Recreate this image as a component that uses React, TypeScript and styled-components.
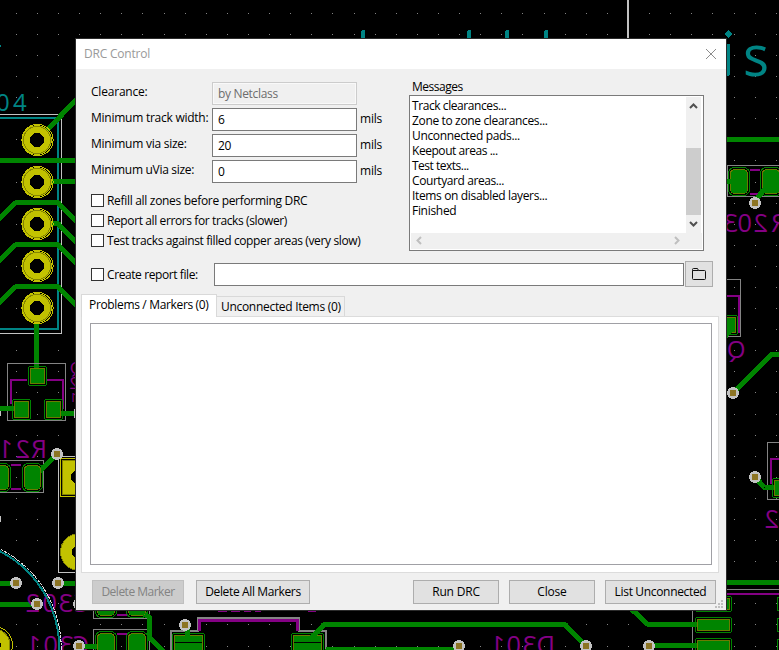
import React from 'react';
import styled, { createGlobalStyle } from 'styled-components';

const GlobalStyle = createGlobalStyle`
  * { box-sizing: border-box; }
  html, body { margin: 0; padding: 0; background: #000; overflow: hidden; }
  body { font-family: "Open Sans", "Noto Sans", sans-serif; font-size: 12px; color: #000; }
`;

const GREEN = '#008400';
const YELLOW = '#c2c200';
const TEAL = '#008484';
const PURPLE = '#840084';
const GRAY = '#848484';
const LIGHT = '#c2c2c2';

/* ---------- Board canvas ---------- */

const Screen = styled.main`
  position: relative;
  width: 779px;
  height: 650px;
  overflow: hidden;
  background: #000;
`;

const Canvas = styled.svg`
  display: block;
  width: 779px;
  height: 650px;
`;

const Silk = styled.text`
  font-family: "Open Sans", "Noto Sans", sans-serif;
  font-weight: 400;
`;

const Track = ({ d, w = 5 }: { d: string; w?: number }) => (
  <path d={d} fill="none" stroke={GREEN} strokeWidth={w} strokeLinecap="round" strokeLinejoin="round" />
);

const Line = ({ d, c, w = 1 }: { d: string; c: string; w?: number }) => (
  <path d={d} fill="none" stroke={c} strokeWidth={w} />
);

const Via = ({ x, y }: { x: number; y: number }) => (
  <g>
    <circle cx={x} cy={y} r={6} fill={LIGHT} />
    <rect x={x - 3} y={y - 3} width={6} height={6} fill="#8c7423" />
  </g>
);

const Ring = ({ x, y }: { x: number; y: number }) => (
  <g>
    <circle cx={x} cy={y} r={10.8} fill="none" stroke={YELLOW} strokeWidth={8} />
    <circle cx={x} cy={y} r={13.6} fill="none" stroke="#848400" strokeWidth={1} />
    <circle cx={x + 0.5} cy={y} r={15.6} fill="none" stroke={YELLOW} strokeWidth={1} />
    <circle cx={x} cy={y} r={7} fill="#000" />
  </g>
);

type PadProps = { x: number; y: number; w: number; h: number; r?: number };
const Pad = ({ x, y, w, h, r = 0 }: PadProps) => (
  <g>
    <rect x={x - 1.5} y={y - 1.5} width={w + 3} height={h + 3} rx={r + 2} fill="none" stroke={GREEN} />
    <rect x={x + 0.5} y={y + 0.5} width={w - 1} height={h - 1} rx={r} fill={GREEN} stroke="#6b7a00" />
  </g>
);

/* Silkscreen on the back side is mirrored; `at` holds the right edge of each character cell. */
const BackLabel = ({ at, y, size = 25.5, text }: { at: number[]; y: number; size?: number; text: string }) => (
  <Silk
    transform={`translate(0 ${y}) scale(-1 1)`}
    x={at.map((v) => -v).join(' ')}
    fill={PURPLE}
    fontSize={size}
  >
    {text}
  </Silk>
);

const gridDots: Array<[number, number]> = [];
for (let row = 0; row < 31; row++) {
  for (let col = 0; col < 37; col++) {
    gridDots.push([Math.floor(16.3 + col * 21.11), Math.floor(13.3 + row * 21.09)]);
  }
}

const Board = () => (
  <Canvas viewBox="0 0 779 650" shapeRendering="crispEdges">
    {gridDots.map(([x, y]) => (
      <rect key={`${x}-${y}`} x={x} y={y} width={1} height={1} fill={GRAY} />
    ))}

    {/* connector on the left */}
    <Line d="M0 114.5H61.5V333.5H0" c={LIGHT} />
    <Line d="M0 118H58V329H0" c={TEAL} w={2} />
    <Silk x="-4 13" y={111} fontSize={24} fill={TEAL}>04</Silk>
    <rect x={0} y={45} width={1} height={2} fill={TEAL} />
    <Track d="M46 131L78 98" />
    <Track d="M-4 160.5H80" />
    <Track d="M46 181.5H80" />
    <Track d="M-2 220L16 202.5H58L80 225" />
    <Track d="M46 223.5H58L80 246" />
    <Track d="M-2 262L16 244.5H58L80 267" />
    <Track d="M-2 304L16 286.5H58L80 309" />
    <Track d="M36.5 310V370" />
    {[140, 182, 224, 266, 308].map((y) => <Ring key={y} x={37} y={y} />)}

    {/* transistor footprint */}
    <rect x={7.5} y={363.5} width={58} height={57} fill="none" stroke={GRAY} />
    <Line d="M11 404V380H27M47 380H63V409" c={PURPLE} w={2} />
    <Track d="M-4 408.5H16" />
    <Track d="M58 413.5H74" />
    <Pad x={30} y={368} w={15} h={16} />
    <Pad x={14} y={401} w={15} h={17} />
    <Pad x={46} y={401} w={15} h={17} />
    <rect x={74} y={409} width={2} height={9} fill={LIGHT} />
    <rect x={0} y={411} width={1} height={5} fill={LIGHT} />
    <BackLabel at={[83]} y={374} size={17} text="Q" />
    <BackLabel at={[79]} y={389} size={17} text="2" />
    <BackLabel at={[77]} y={402} size={13} text="1" />

    {/* R21 */}
    <BackLabel at={[47, 30, 13]} y={458} text="R21" />
    <Line d="M0 460.5H43.5V492.5H0" c={GRAY} />
    <Line d="M11 465H21M11 489H21" c={PURPLE} w={2} />
    <Track d="M57 454L38 473" />
    <Pad x={24} y={465} w={17} h={25} r={4} />
    <Pad x={-8} y={465} w={17} h={25} r={4} />
    <Line d="M80 456.5H58.5V572.5H80" c={LIGHT} />
    <rect x={60.5} y={458.5} width={30} height={38} fill="none" stroke={YELLOW} />
    <rect x={62.5} y={460.5} width={30} height={34} fill={YELLOW} stroke="#848400" />
    <circle cx={78} cy={477} r={7} fill="#000" />
    <circle cx={79} cy={552} r={18.5} fill={YELLOW} stroke="#848400" />
    <circle cx={79} cy={552} r={7} fill="#000" />
    <Via x={57} y={454} />
    <rect x={0} y={516} width={1} height={6} fill={LIGHT} />

    {/* bottom left */}
    <Track d="M-4 583H16" />
    <Track d="M58 583H80" />
    <Track d="M-4 604H37" />
    <BackLabel at={[90, 73, 57, 40]} y={612} text="C302" />
    <BackLabel at={[89, 74, 58, 41]} y={654} text="C301" />
    <circle cx={-49.3} cy={648} r={108.5} fill="none" stroke={TEAL} strokeWidth={2} />
    <circle cx={-49.3} cy={648} r={110.5} fill="none" stroke="#e0e0e0" strokeDasharray="3 1" />
    <circle cx={-6} cy={645} r={16} fill={YELLOW} stroke="#848400" />
    <circle cx={-6} cy={645} r={18.5} fill="none" stroke={YELLOW} />
    <circle cx={-6} cy={645} r={7} fill="#000" />
    <rect x={93.5} y={590.5} width={55.5} height={28} fill="none" stroke={GRAY} />
    <rect x={93.5} y={629.5} width={55.5} height={28} fill="none" stroke={GRAY} />
    <Line d="M117 615H127M117 634H127" c={PURPLE} w={2} />
    <Track d="M79 646H100" />
    <Track d="M137 610L149.5 617V638L164 652" />
    <Pad x={97} y={592} w={18} h={24} r={4} />
    <Pad x={128} y={592} w={18} h={24} r={4} />
    <Pad x={97} y={633} w={18} h={24} r={4} />
    <Pad x={128} y={633} w={18} h={24} r={4} />
    <Via x={16} y={583} />
    <Via x={58} y={583} />
    <Via x={37} y={604} />
    <Via x={79} y={646} />
    <Via x={79} y={604} />

    {/* diode D301 and neighbours */}
    <Line d="M171 652V631H198V618H299V631H326V652" c={GRAY} w={2} />
    <Line d="M199.5 631V620.5H297V631" c={PURPLE} w={3} />
    <Line d="M218 611H227M231 611H240M244 611H251M255 611H261M308 611H316" c={PURPLE} w={2} />
    <Pad x={174} y={635} w={29} h={20} />
    <Pad x={293} y={635} w={29} h={20} />
    <Line d="M175 642.5H202M294 642.5H321" c="#000" />
    <Track d="M187 627V636" />
    <Track d="M313 636L324 624.5H565L586 646" />
    <Track d="M328 649.5H455" />
    <Via x={185} y={625} />
    <Via x={459} y={646} />
    <BackLabel at={[555, 537, 521, 505]} y={654} text="D301" />
    <Via x={586} y={646} />

    {/* connector in the lower right */}
    <Line d="M692.5 600V650M720 589.5H779" c={GRAY} />
    <Line d="M720 594H779" c={PURPLE} w={2} />
    <Track d="M720 582.5H784" />
    <Track d="M628 606L648 624.5H700" />
    <Track d="M649 645.5H700" />
    <Pad x={697} y={598} w={33} h={12} />
    <Pad x={697} y={619} w={33} h={12} />
    <Pad x={697} y={640} w={33} h={12} />
    <Line d="M779 597.5H777.5V610.5H779M779 618.5H777.5V631.5H779M779 639.5H777.5V652" c={GREEN} />
    <Via x={649} y={646} />

    {/* top silk */}
    {[363, 469, 507, 546].map((x) => (
      <path key={x} d={`M${x - 2} 39V31L${x - 1} 30H${x + 1}L${x + 2} 31V39Z`} fill={TEAL} />
    ))}
    <rect x={627} y={0} width={2} height={39} fill={LIGHT} />
    <rect x={646} y={38} width={4} height={1} fill={TEAL} />
    <path d="M728 30L732 34L728 38L724 34Z" fill={TEAL} />
    <rect x={726} y={44} width={4} height={32} rx={2} fill={TEAL} />
    <Silk x={743} y={75.5} fontSize={57} fill={TEAL} textLength={26} lengthAdjust="spacingAndGlyphs">s</Silk>

    {/* R203 */}
    <Track d="M720 139.5H784" />
    <Line d="M779 165.5H727.5V196.5H779" c={GRAY} />
    <Line d="M750 170H760M750 194H760" c={PURPLE} w={2} />
    <Pad x={730} y={169} w={18} h={25} r={4} />
    <Pad x={762} y={169} w={18} h={25} r={4} />
    <Track d="M720 181.5H732" />
    <Track d="M755 200L766 188" />
    <Via x={755} y={203} />
    <BackLabel at={[787, 768, 752, 738]} y={232} text="R203" />

    {/* Q on the right edge of the dialog */}
    <rect x={700.5} y={279.5} width={40} height={57} fill="none" stroke={GRAY} />
    <Line d="M720 296H739V333" c={PURPLE} w={2} />
    <Pad x={721} y={317} w={15} h={16} />
    <Track d="M722 340L730 331" />
    <BackLabel at={[745.5]} y={358} size={24} text="Q" />
    <Track d="M733 393L771.5 354.5H784" />
    <Via x={733} y={393} />

    {/* lower right transistor */}
    <Line d="M779 442.5H767.5V499.5H779" c={GRAY} />
    <Line d="M771 484V459H779" c={PURPLE} w={2} />
    <Track d="M755 477L764.5 487.5H776" />
    <Pad x={774} y={480} w={15} h={16} />
    <Via x={755} y={477} />
    <BackLabel at={[779]} y={528} text="2" />
  </Canvas>
);

/* ---------- Dialog ---------- */

const Dialog = styled.section`
  position: absolute;
  left: 76px;
  top: 39px;
  width: 650px;
  height: 571px;
  display: flex;
  flex-direction: column;
  background: #f0f0f0;
  box-shadow: 0 0 0 1px #2b2b2b;
`;

const Text = styled.span<{ $ls?: number; $shift?: number }>`
  display: inline-block;
  white-space: nowrap;
  line-height: 16px;
  letter-spacing: ${(p) => p.$ls ?? -0.2}px;
  transform: translateY(${(p) => p.$shift ?? 0}px);
`;

const TitleBar = styled.header`
  height: 30px;
  display: flex;
  align-items: center;
  justify-content: space-between;
  padding: 0 9px 0 8px;
  background: #fff;
  color: #999;
`;

const Settings = styled.div`
  display: flex;
  justify-content: space-between;
  height: 182px;
  padding: 9px 22px 0 15px;
`;

const Options = styled.div`
  padding-top: 4px;
`;

const Fields = styled.div`
  display: grid;
  grid-template-columns: 121px 145px auto;
  grid-auto-rows: 23px;
  row-gap: 3px;
`;

const Field = styled.div<{ $disabled?: boolean }>`
  display: flex;
  align-items: center;
  padding-left: 5px;
  border: 1px solid ${(p) => (p.$disabled ? '#ccc' : '#7a7a7a')};
  background: ${(p) => (p.$disabled ? '#f0f0f0' : '#fff')};
  box-shadow: ${(p) => (p.$disabled ? 'inset 0 0 0 1px #f9f9f9' : 'none')};
  color: ${(p) => (p.$disabled ? '#6d6d6d' : '#000')};
`;

const Unit = styled.div`
  padding-left: 3px;
`;

const Checks = styled.div`
  display: grid;
  grid-auto-rows: 20px;
  margin-top: 7px;
`;

const Check = styled.div`
  display: flex;
  align-items: center;
  gap: 3px;
`;

const Box = styled.span`
  width: 13px;
  height: 13px;
  flex: none;
  border: 1px solid #333;
  background: #fff;
`;

const Messages = styled.div`
  display: flex;
  flex-direction: column;
  align-items: flex-start;
  width: 295px;
  & > span { margin-left: 3px; }
`;

const MessageBox = styled.div`
  display: grid;
  grid-template-columns: 275px 16px;
  grid-template-rows: 136px 16px;
  width: 295px;
  height: 156px;
  margin-top: 1px;
  padding: 1px;
  border: 1px solid #7a7a7a;
  background: #fff;
`;

const MessageList = styled.div`
  display: flex;
  flex-direction: column;
  padding: 1px 0 0 1px;
`;

const Message = styled(Text)`
  line-height: 15px;
`;

const VBar = styled.div`
  display: flex;
  flex-direction: column;
  align-items: center;
  justify-content: space-between;
  width: 15px;
  padding: 5px 0 5px;
  background: #f0f0f0;
`;

const Thumb = styled.div`
  width: 15px;
  height: 67px;
  margin-top: 32px;
  background: #cdcdcd;
`;

const HBar = styled.div`
  grid-column: 1 / 3;
  width: 291px;
  display: flex;
  align-items: center;
  justify-content: space-between;
  padding: 0 21px 1px 4px;
  background: #f0f0f0;
`;

const Report = styled.div`
  display: flex;
  align-items: center;
  height: 26px;
  margin: 10px 0 0 15px;

  ${Check} { width: 123px; }
  ${Field} { width: 470px; height: 23px; }
`;

const Browse = styled.button`
  width: 28px;
  height: 26px;
  margin-left: 1px;
  padding: 0;
  display: flex;
  align-items: center;
  justify-content: center;
  border: 1px solid #adadad;
  background: #e1e1e1;
`;

const TabBar = styled.nav`
  display: flex;
  align-items: flex-end;
  height: 22px;
  margin: 7px 0 0 5px;
`;

const Tab = styled.div<{ $active?: boolean }>`
  display: flex;
  align-items: center;
  width: ${(p) => (p.$active ? 136 : 129)}px;
  height: ${(p) => (p.$active ? 23 : 20)}px;
  padding-left: ${(p) => (p.$active ? 7 : 4)}px;
  margin-left: ${(p) => (p.$active ? 0 : -1)}px;
  border: 1px solid #d9d9d9;
  border-bottom: 0;
  background: ${(p) => (p.$active ? '#fff' : '#f0f0f0')};
  z-index: ${(p) => (p.$active ? 2 : 0)};
  margin-bottom: ${(p) => (p.$active ? -1 : 0)}px;
`;

const TabPanel = styled.div`
  width: 638px;
  height: 257px;
  margin-left: 5px;
  padding: 6px 6px 7px 8px;
  border: 1px solid #dcdcdc;
  background: #fff;
`;

const Problems = styled.div`
  height: 242px;
  border: 1px solid #a0a0a5;
  background: #fff;
`;

const Footer = styled.footer`
  display: flex;
  padding: 7px 10px 0 16px;
`;

const Button = styled.button<{ $w: number; $gap?: number; $off?: boolean }>`
  width: ${(p) => p.$w}px;
  height: 24px;
  margin: 0 0 0 ${(p) => p.$gap ?? 0}px;
  padding: 0 0 2px;
  font: inherit;
  border: 1px solid ${(p) => (p.$off ? '#bfbfbf' : '#adadad')};
  background: ${(p) => (p.$off ? '#ccc' : '#e1e1e1')};
  color: ${(p) => (p.$off ? '#838383' : '#000')};
`;

const Grip = styled.svg`
  position: absolute;
  right: 3px;
  bottom: 2px;
`;

const Chevron = ({ rotate, color }: { rotate: number; color: string }) => (
  <svg width="9" height="9" viewBox="0 0 9 9">
    <path d="M1 6L4.5 2.5L8 6" transform={`rotate(${rotate} 4.5 4.5)`} fill="none" stroke={color} strokeWidth="2" />
  </svg>
);

const fields = [
  { label: 'Clearance:', value: 'by Netclass', unit: '', disabled: true, ls: -0.2 },
  { label: 'Minimum track width:', value: '6', unit: 'mils', ls: -0.25 },
  { label: 'Minimum via size:', value: '20', unit: 'mils', ls: -0.25 },
  { label: 'Minimum uVia size:', value: '0', unit: 'mils', ls: -0.3 },
];

const checks: Array<[string, number]> = [
  ['Refill all zones before performing DRC', -0.31],
  ['Report all errors for tracks (slower)', -0.39],
  ['Test tracks against filled copper areas (very slow)', -0.37],
];

const messages: Array<[string, number]> = [
  ['Track clearances...', -0.42],
  ['Zone to zone clearances...', -0.35],
  ['Unconnected pads...', -0.34],
  ['Keepout areas ...', -0.45],
  ['Test texts...', -0.5],
  ['Courtyard areas...', -0.42],
  ['Items on disabled layers...', -0.35],
  ['Finished', -0.3],
];

export default function App() {
  return (
    <Screen>
      <GlobalStyle />
      <Board />
      <Dialog>
        <TitleBar>
          <Text>DRC Control</Text>
          <svg width="12" height="12" viewBox="0 0 12 12">
            <path d="M1 1L11 11M11 1L1 11" stroke="#8c8c8c" strokeWidth="1" fill="none" />
          </svg>
        </TitleBar>
        <Settings>
          <Options>
            <Fields>
              {fields.map((f) => (
                <React.Fragment key={f.label}>
                  <Text $ls={f.ls} $shift={2}>{f.label}</Text>
                  <Field $disabled={f.disabled}><Text $ls={-0.33}>{f.value}</Text></Field>
                  <Unit><Text $shift={2}>{f.unit}</Text></Unit>
                </React.Fragment>
              ))}
            </Fields>
            <Checks>
              {checks.map(([label, ls]) => (
                <Check key={label}><Box /><Text $ls={ls} $shift={1}>{label}</Text></Check>
              ))}
            </Checks>
          </Options>
          <Messages>
            <Text $ls={-0.5} $shift={1}>Messages</Text>
            <MessageBox>
              <MessageList>
                {messages.map(([line, ls]) => <Message key={line} $ls={ls}>{line}</Message>)}
              </MessageList>
              <VBar>
                <Chevron rotate={0} color="#505050" />
                <Thumb />
                <Chevron rotate={180} color="#505050" />
              </VBar>
              <HBar>
                <Chevron rotate={-90} color="#bfbfbf" />
                <Chevron rotate={90} color="#bfbfbf" />
              </HBar>
            </MessageBox>
          </Messages>
        </Settings>
        <Report>
          <Check><Box /><Text $ls={-0.41} $shift={1}>Create report file:</Text></Check>
          <Field />
          <Browse aria-label="Browse">
            <svg width="16" height="14" viewBox="0 0 16 14">
              <path d="M1.5 3.5V11.5Q1.5 12.5 2.5 12.5H13.5Q14.5 12.5 14.5 11.5V4.5Q14.5 3.5 13.5 3.5H7.5L6.5 1.5H2.5Q1.5 1.5 1.5 2.5V3.5H7.5" fill="none" stroke="#111" />
            </svg>
          </Browse>
        </Report>
        <TabBar>
          <Tab $active><Text $ls={-0.34} $shift={-1}>Problems / Markers (0)</Text></Tab>
          <Tab><Text $ls={-0.3}>Unconnected Items (0)</Text></Tab>
        </TabBar>
        <TabPanel><Problems /></TabPanel>
        <Footer>
          <Button $w={92} $off><Text $ls={-0.5}>Delete Marker</Text></Button>
          <Button $w={114} $gap={12}><Text $ls={-0.37}>Delete All Markers</Text></Button>
          <Button $w={86} $gap={103}><Text>Run DRC</Text></Button>
          <Button $w={86} $gap={10}><Text>Close</Text></Button>
          <Button $w={111} $gap={10}><Text $ls={-0.33}>List Unconnected</Text></Button>
        </Footer>
        <Grip width="8" height="8" viewBox="0 0 8 8" fill="#bfbfbf">
          <path d="M6 0h2v2h-2zM3 3h2v2h-2zM6 3h2v2h-2zM0 6h2v2h-2zM3 6h2v2h-2zM6 6h2v2h-2z" />
        </Grip>
      </Dialog>
    </Screen>
  );
}
